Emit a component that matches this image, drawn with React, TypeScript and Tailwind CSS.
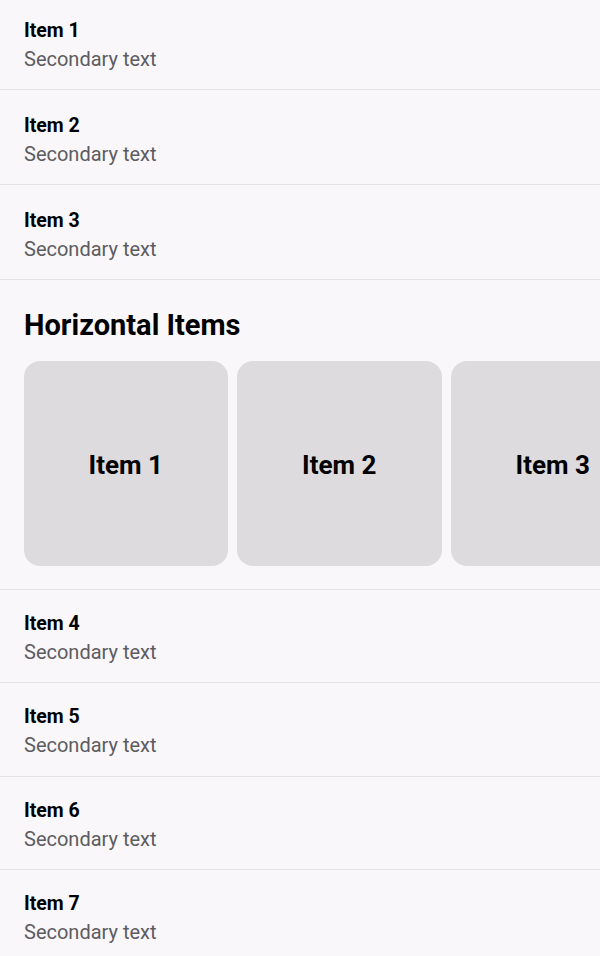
import React from "react";

function Row({ title, lower, last }: { title: string; lower?: boolean; last?: boolean }) {
  return (
    <div
      className={
        "flex flex-col pl-6 " +
        (lower ? "h-[93.33px] pt-[22px] " : "h-[95px] pt-[24px] ") +
        (last ? "" : "border-b border-[#e4e2e5]")
      }
    >
      <div className="text-[19.5px] leading-[24px] font-bold text-black">{title}</div>
      <div className="mt-[3px] text-[20px] leading-[26px] text-[#5d5c60]">Secondary text</div>
    </div>
  );
}

function Card({ label }: { label: string }) {
  return (
    <div className="w-[204.5px] h-[205px] shrink-0 rounded-[16px] bg-[#dddbde] flex items-center justify-center pt-[3px]">
      <span className="text-[26px] font-bold text-black">{label}</span>
    </div>
  );
}

export default function App() {
  return (
    <div
      className="w-[600px] h-[956px] overflow-hidden bg-[#f9f7fa]"
      style={{ fontFamily: "Roboto, 'Noto Sans', sans-serif" }}
    >
      <div className="-mt-[5px]">
        <Row title="Item 1" />
        <Row title="Item 2" />
        <Row title="Item 3" />
        <div className="h-[310px] pt-[27px] border-b border-[#e4e2e5] flex flex-col">
          <div className="pl-6 text-[29px] leading-[36px] font-bold text-black">Horizontal Items</div>
          <div className="mt-[18px] pl-[23.5px] flex gap-[9px] overflow-hidden">
            <Card label="Item 1" />
            <Card label="Item 2" />
            <Card label="Item 3" />
          </div>
        </div>
        <Row title="Item 4" lower />
        <Row title="Item 5" lower />
        <Row title="Item 6" lower />
        <Row title="Item 7" lower last />
      </div>
    </div>
  );
}
